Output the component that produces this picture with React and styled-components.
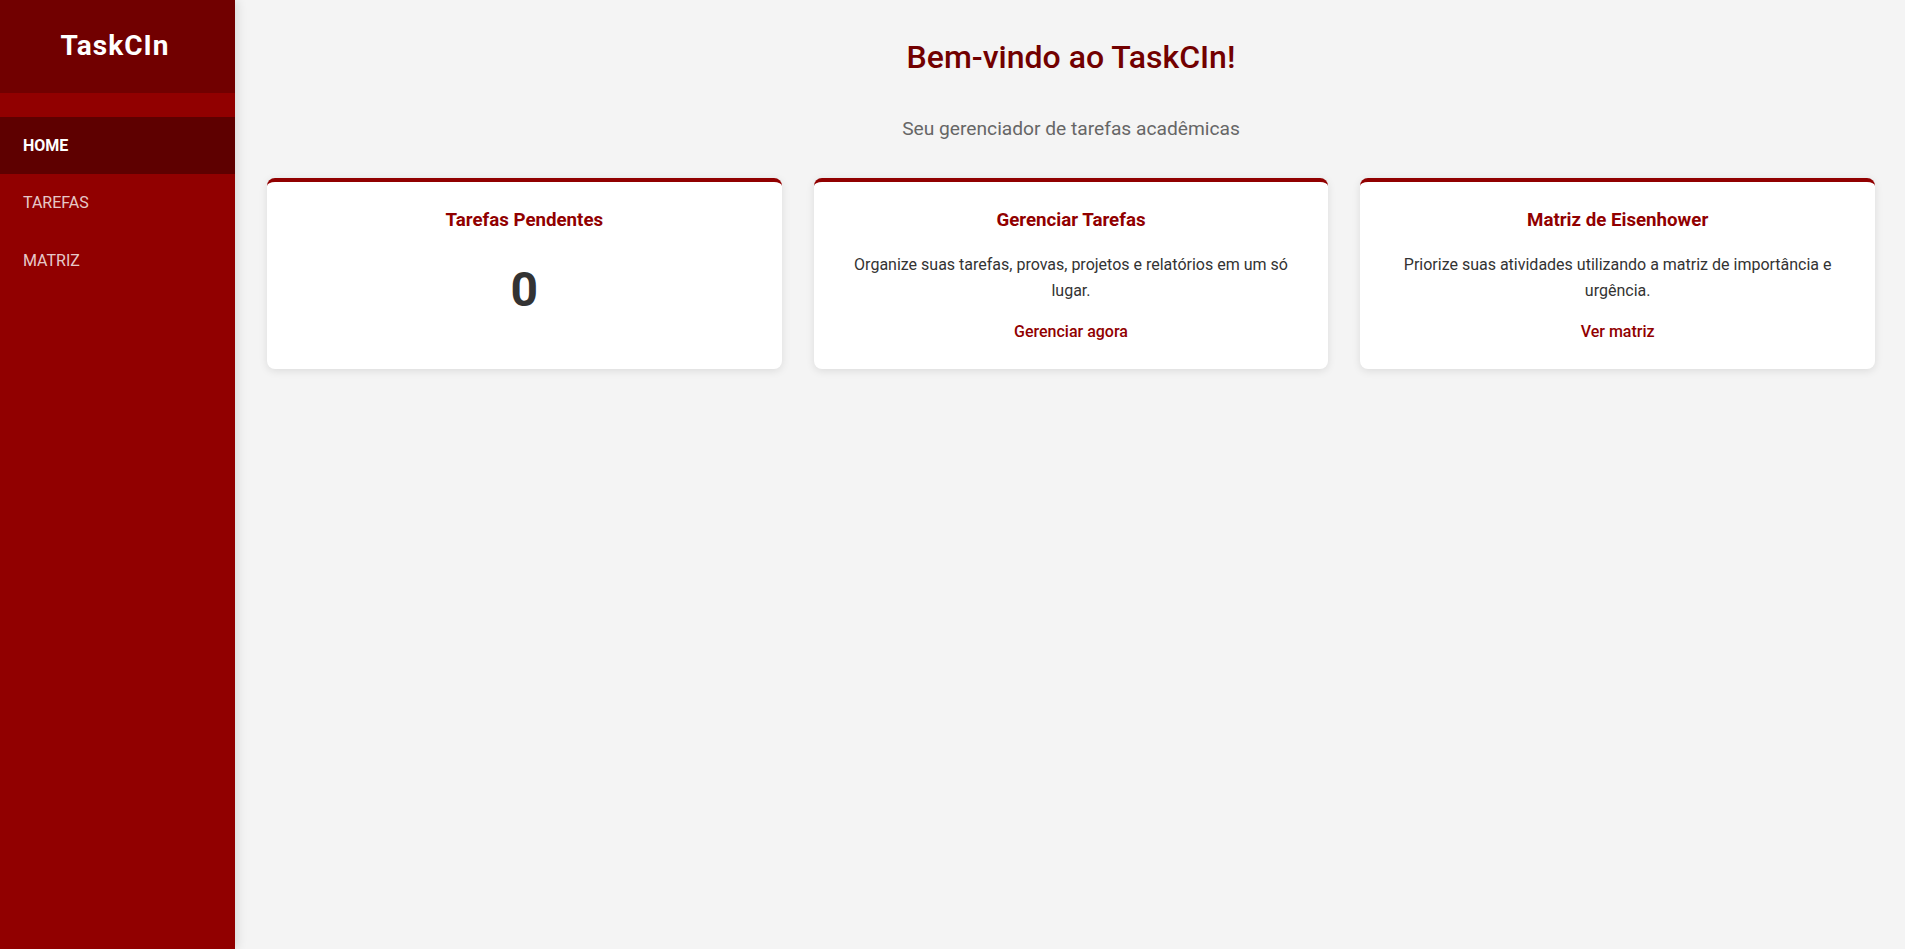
import React from "react";
import styled, { createGlobalStyle } from "styled-components";

const GlobalStyle = createGlobalStyle`
  * { box-sizing: border-box; }
  html, body { margin: 0; padding: 0; height: 100%; }
  body {
    font-family: Roboto, "Noto Sans", "Liberation Sans", sans-serif;
    line-height: 1.6;
    background: #f4f4f4;
    color: #333;
  }
  #root { height: 100%; }
`;

const Layout = styled.div`
  display: flex;
  min-height: 100vh;
`;

const Sidebar = styled.aside`
  width: 235px;
  flex-shrink: 0;
  background: #910000;
  box-shadow: 2px 0 10px rgba(0, 0, 0, 0.12);
  display: flex;
  flex-direction: column;
  position: relative;
  z-index: 1;
`;

const Brand = styled.div`
  background: #710000;
  padding: 30px 5px 30px 0;
  text-align: center;
  color: #fff;
  font-size: 28px;
  font-weight: 700;
  letter-spacing: 1px;
  line-height: 1.172;
`;

const Nav = styled.nav`
  display: flex;
  flex-direction: column;
  padding-top: 24px;
`;

const NavItem = styled.a`
  display: block;
  padding: 16px 23px;
  font-size: 16px;
  line-height: 1.6;
  text-transform: uppercase;
  text-decoration: none;
  cursor: pointer;
  color: ${(p) => (p.$active ? "#fff" : "rgba(255,255,255,0.8)")};
  font-weight: ${(p) => (p.$active ? 700 : 400)};
  background: ${(p) => (p.$active ? "#5e0000" : "transparent")};
`;

const Main = styled.main`
  flex: 1;
  padding: 32px 30px 32px 32px;
  min-width: 0;
`;

const Title = styled.h1`
  margin: 0 0 31px;
  text-align: center;
  font-size: 32px;
  font-weight: 500;
  color: #720000;
`;

const Subtitle = styled.p`
  margin: 0 0 33px;
  text-align: center;
  font-size: 19.2px;
  color: #666;
`;

const Grid = styled.div`
  display: grid;
  grid-template-columns: repeat(3, 1fr);
  gap: 32px;
`;

const Card = styled.section`
  background: #fff;
  border-top: 4px solid #910000;
  border-radius: 8px;
  box-shadow: 0 2px 8px rgba(0, 0, 0, 0.1);
  padding: 24px;
  text-align: center;
`;

const CardTitle = styled.h3`
  margin: 0 0 18px;
  font-size: 18.7px;
  line-height: 28px;
  font-weight: 700;
  color: #910000;
`;

const Count = styled.div`
  font-size: 48px;
  font-weight: 700;
  color: #333;
`;

const Desc = styled.p`
  margin: 0 0 16px;
  font-size: 16px;
  color: #333;
`;

const CardLink = styled.a`
  display: inline-block;
  font-size: 16px;
  font-weight: 500;
  color: #910000;
  text-decoration: none;
  cursor: pointer;
`;

export default function App() {
  return (
    <>
      <GlobalStyle />
      <Layout>
        <Sidebar>
          <Brand>TaskCIn</Brand>
          <Nav>
            <NavItem $active>Home</NavItem>
            <NavItem>Tarefas</NavItem>
            <NavItem>Matriz</NavItem>
          </Nav>
        </Sidebar>
        <Main>
          <Title>Bem-vindo ao TaskCIn!</Title>
          <Subtitle>Seu gerenciador de tarefas acadêmicas</Subtitle>
          <Grid>
            <Card>
              <CardTitle>Tarefas Pendentes</CardTitle>
              <Count>0</Count>
            </Card>
            <Card>
              <CardTitle>Gerenciar Tarefas</CardTitle>
              <Desc>Organize suas tarefas, provas, projetos e relatórios em um só lugar.</Desc>
              <CardLink>Gerenciar agora</CardLink>
            </Card>
            <Card>
              <CardTitle>Matriz de Eisenhower</CardTitle>
              <Desc>Priorize suas atividades utilizando a matriz de importância e urgência.</Desc>
              <CardLink>Ver matriz</CardLink>
            </Card>
          </Grid>
        </Main>
      </Layout>
    </>
  );
}
